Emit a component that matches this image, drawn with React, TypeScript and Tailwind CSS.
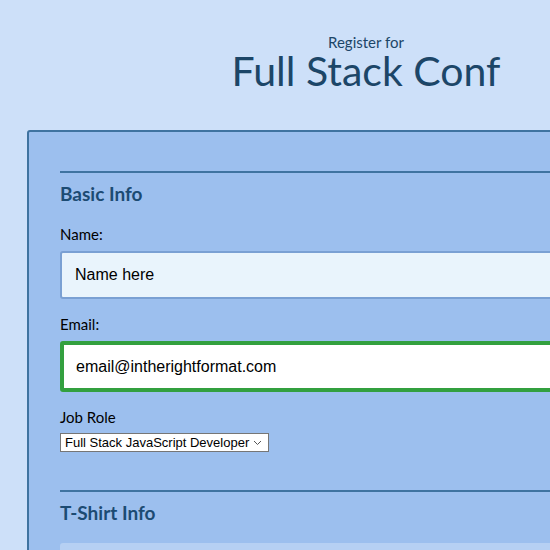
import React from "react";

const App = () => {
  return (
    <div className="min-h-[550px] h-[550px] w-[550px] overflow-hidden bg-[#cde0f9] font-['Lato',sans-serif]">
      <div className="w-[732px]">
        {/* Header */}
        <header className="flex flex-col items-center pt-[33px] text-[#1c4668]">
          <span className="text-[15px] leading-[18px]">Register for</span>
          <h1 className="text-[41px] leading-[40px]">Full Stack Conf</h1>
        </header>

        {/* Form card */}
        <form className="ml-[27px] mt-[39px] rounded-[3px] border-2 border-[#3f73a0] bg-[#9cbfee] pl-[31px] pt-[39px] pr-[31px]">
          <fieldset>
            <div className="h-[2px] bg-[#3f73a0]" />
            <h2 className="mt-[9px] text-[19px] font-bold leading-[24px] text-[#1c4b73]">Basic Info</h2>

            <label className="mt-[19px] block text-[15px] leading-[18px] text-black">Name:</label>
            <input
              type="text"
              placeholder="Name here"
              className="mt-[8px] h-[48px] w-full rounded-[3px] border-2 border-[#7aa0d3] bg-[#e9f4fc] px-[13px] font-['Liberation_Sans',Arial,sans-serif] text-[16px] text-black placeholder:text-black outline-none"
            />

            <label className="mt-[16px] block text-[15px] leading-[18px] text-black">Email:</label>
            <input
              type="email"
              defaultValue="email@intherightformat.com"
              className="mt-[8px] h-[51px] w-full rounded-[3px] border-4 border-[#33a03f] bg-white px-[12px] font-['Liberation_Sans',Arial,sans-serif] text-[16px] text-black outline-none"
            />

            <label className="mt-[16px] block text-[15px] leading-[18px] text-black">Job Role</label>
            <div className="mt-[7px] flex h-[19px] w-[209px] items-center justify-between border border-[#767676] bg-white pl-[4px] pr-[6px] font-['Liberation_Sans',Arial,sans-serif] text-[13px] leading-none text-black">
              <span>Full Stack JavaScript Developer</span>
              <svg width="9" height="6" viewBox="0 0 9 6" fill="none">
                <path d="M1 1l3.5 3.5L8 1" stroke="#555" strokeWidth="1" />
              </svg>
            </div>
          </fieldset>

          <fieldset className="mt-[38px]">
            <div className="h-[2px] bg-[#3f73a0]" />
            <h2 className="mt-[9px] text-[19px] font-bold leading-[24px] text-[#1c4b73]">T-Shirt Info</h2>
            <div className="mt-[18px] h-[40px] w-full rounded-[3px] bg-[#b6d0f3]" />
          </fieldset>
        </form>
      </div>
    </div>
  );
};

export default App;
